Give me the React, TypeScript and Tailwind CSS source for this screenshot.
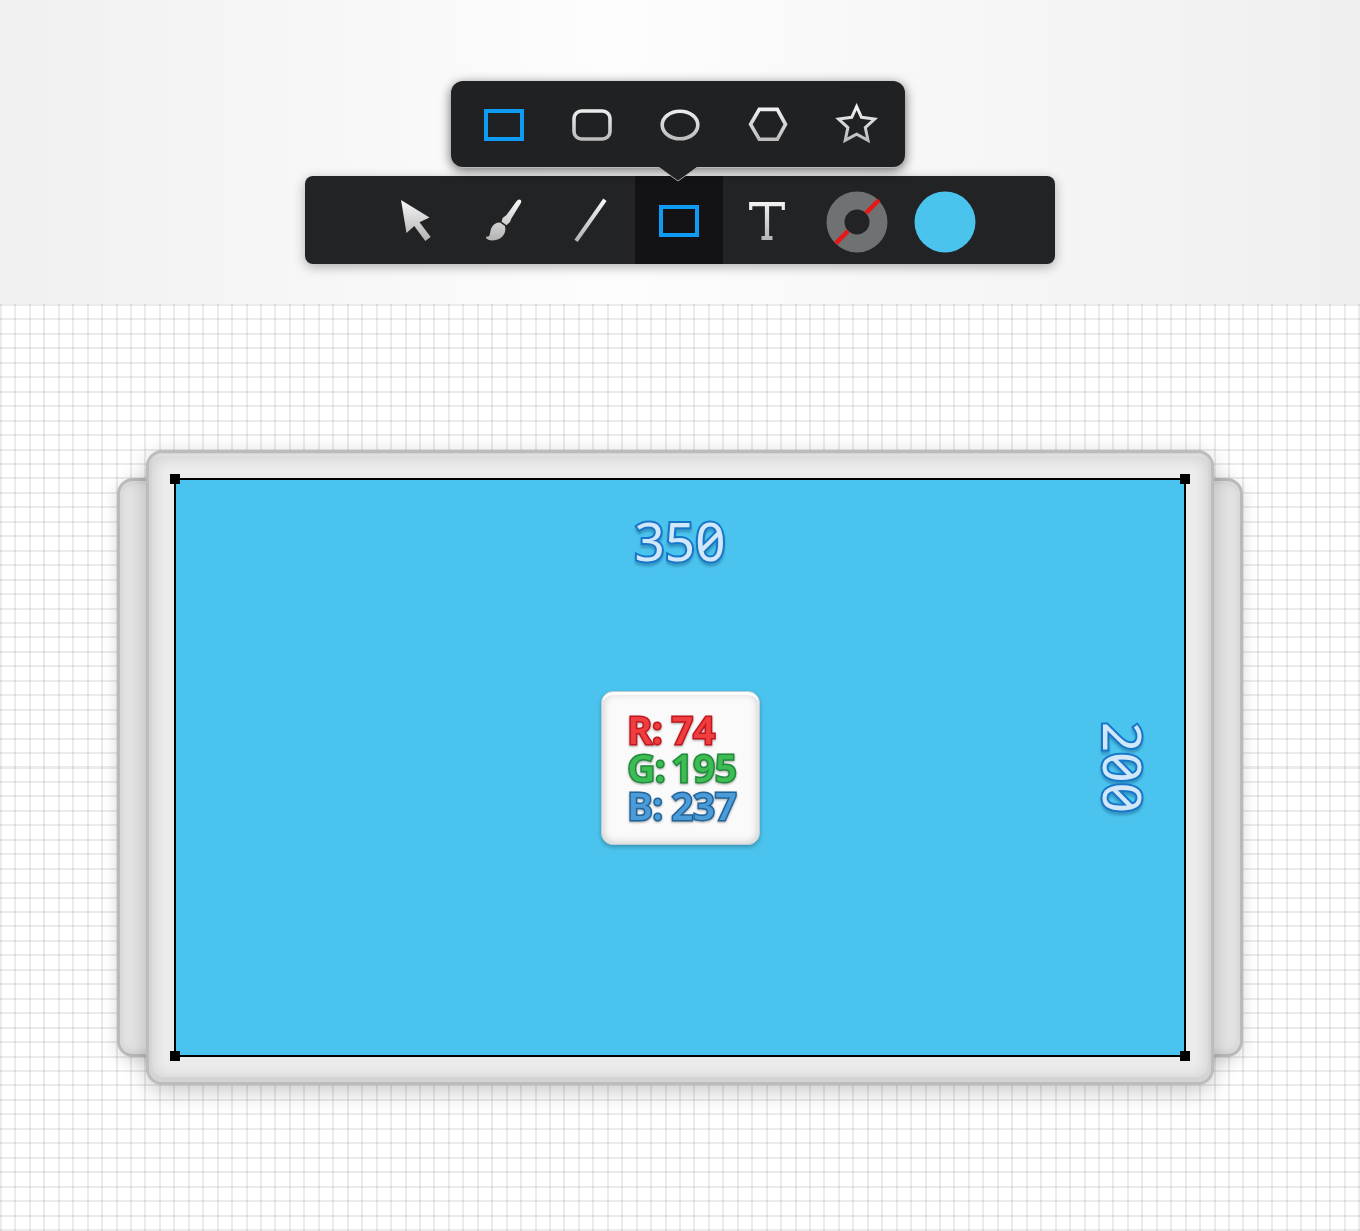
import type { ReactNode } from "react";

const metal = "url(#metal)";

function ToolButton({ label, active = false, short = false, children }: {
  label: string;
  active?: boolean;
  short?: boolean;
  children: ReactNode;
}) {
  return (
    <button
      type="button"
      aria-label={label}
      aria-pressed={active}
      className={`${short ? "h-[86px]" : "h-[88px]"} w-[88px] shrink-0 ${active && !short ? "bg-[#131315]" : ""}`}
    >
      <svg viewBox="0 0 88 88" className="size-[88px]" fill="none" aria-hidden="true">
        {children}
      </svg>
    </button>
  );
}

function ShapeMenu() {
  return (
    <div
      role="group"
      aria-label="Shapes"
      className="relative z-10 mr-1 flex h-[86px] rounded-xl bg-[#202123] pr-[5px] pl-[9px] shadow-[0_1px_0_#b9b9b9,0_3px_12px_rgba(0,0,0,0.6)]"
    >
      <ToolButton label="Rectangle" active short>
        <rect x="26" y="30" width="36" height="28" stroke="#0e9bf3" strokeWidth="4" />
      </ToolButton>
      <ToolButton label="Rounded rectangle" short>
        <rect x="26" y="30" width="36" height="28" rx="7.5" stroke={metal} strokeWidth="3.6" />
      </ToolButton>
      <ToolButton label="Ellipse" short>
        <ellipse cx="44" cy="44" rx="17.8" ry="13.8" stroke={metal} strokeWidth="3.6" />
      </ToolButton>
      <ToolButton label="Polygon" short>
        <path d="M35.3 28.4H53.3L61.5 43.3L53.3 58.3H35.3L26.6 43.3Z" stroke={metal} strokeWidth="3.6" />
      </ToolButton>
      <ToolButton label="Star" short>
        <path d="M44.6 25.6L49.5 36.3L62.6 38L53.3 46.6L56 59.4L44.6 53.3L33.2 59.4L35.9 46.6L26.6 38L39.7 36.3Z" stroke={metal} strokeWidth="3" />
      </ToolButton>
      <svg viewBox="0 0 40 16" className="absolute top-[85px] left-[207px] h-4 w-10" aria-hidden="true">
        <path d="M0 0V1L1 1L20 15L39 1H40V0Z" fill="#202123" />
        <path d="M0 1.5H1L20 15L39 1.5H40" fill="none" stroke="#a8a8a8" strokeWidth="1" />
      </svg>
    </div>
  );
}

function Toolbar() {
  return (
    <div
      role="toolbar"
      aria-label="Drawing tools"
      className="mt-[9px] flex w-[750px] rounded-lg bg-[#222325] pl-[66px] shadow-[0_3px_12px_rgba(0,0,0,0.3)]"
    >
      <ToolButton label="Select">
        <path d="M30 24L58.5 41.5L48.5 46.2L59.7 61L54.3 65L43.3 50L35.5 57Z" fill={metal} />
      </ToolButton>
      <ToolButton label="Brush">
        <path d="M57.5 25.2Q59.6 22.6 61.4 23.8Q63 25 61.6 27.4L52.4 42.6L51 46L47.6 49.2L42.6 45.8L43.6 42L47.5 39Z" fill={metal} />
        <path d="M27 60.5C31 61.5 30.6 58.5 31.6 54.5C33 49 37 46.2 41 46.6L46 50C47.4 56 44.8 60.4 40 63C36 65 29.5 65.2 27 62Z" fill={metal} />
      </ToolButton>
      <ToolButton label="Line">
        <path d="M30.2 63.2L56.8 25.4" stroke={metal} strokeWidth="4" strokeLinecap="square" />
      </ToolButton>
      <ToolButton label="Rectangle" active>
        <rect x="26" y="31" width="36" height="28" stroke="#0e9bf3" strokeWidth="4" />
      </ToolButton>
      <ToolButton label="Text">
        <path d="M27.7 34V27.7H60.3V34" stroke={metal} strokeWidth="3.2" />
        <path d="M27 28.2H61M44 28V62M38.5 62H49.5" stroke={metal} strokeWidth="4.2" />
      </ToolButton>
      <ToolButton label="No stroke">
        <circle cx="46" cy="46" r="21.5" stroke="#707173" strokeWidth="18" />
        <path d="M24.7 67.3L37 55M55 37L68 24" stroke="#e61717" strokeWidth="4.5" />
      </ToolButton>
      <ToolButton label="Fill colour">
        <circle cx="46" cy="46" r="30.5" fill="#4ac3ed" />
      </ToolButton>
    </div>
  );
}

const channels = [
  { name: "R:", value: 74, style: "text-[#ee3e40] [-webkit-text-stroke:3px_#c4141c]" },
  { name: "G:", value: 195, style: "text-[#3cbc52] [-webkit-text-stroke:3px_#1f8a3c]" },
  { name: "B:", value: 237, style: "text-[#4a9bd8] [-webkit-text-stroke:3px_#1f659c]" },
];

function ColourCard() {
  return (
    <dl className="col-start-1 row-start-1 h-[154px] w-[159px] place-self-center rounded-xl border border-[#b9cdd6] bg-[#fafafa] pt-[18px] pl-[26px] text-[38px] leading-[38px] font-semibold shadow-[0_2px_4px_rgba(0,0,0,0.25),inset_0_3px_1px_#fff,inset_0_0_7px_2px_rgba(0,0,0,0.16)]">
      {channels.map((c) => (
        <div key={c.name} className={`flex drop-shadow-[0_1px_1px_rgba(0,0,0,0.35)] [paint-order:stroke_fill] ${c.style}`}>
          <dt className="w-[44px]">{c.name}</dt>
          <dd>{c.value}</dd>
        </div>
      ))}
    </dl>
  );
}

const sizeText =
  "col-start-1 row-start-1 text-[53px] leading-[64px] text-[#d3e7fb] slashed-zero drop-shadow-[0_3px_1px_rgba(0,40,90,0.28)] [-webkit-text-stroke:4px_#1676c8] [paint-order:stroke_fill]";

const handle = "absolute size-[10px] bg-black";

function Artboard() {
  return (
    <div className="relative grid aspect-[1012/579] w-full border-2 border-black bg-[#4ac4ee]">
      <span className={`${sizeText} mt-[29px] self-start justify-self-center`}>350</span>
      <span className={`${sizeText} mr-[29px] self-center justify-self-end [writing-mode:vertical-rl]`}>200</span>
      <ColourCard />
      <i className={`${handle} -top-[6px] -left-[6px]`} />
      <i className={`${handle} -top-[6px] -right-[6px]`} />
      <i className={`${handle} -bottom-[6px] -left-[6px]`} />
      <i className={`${handle} -right-[6px] -bottom-[6px]`} />
    </div>
  );
}

export default function App() {
  return (
    <div className="min-h-screen bg-white font-['Noto_Sans','Open_Sans',sans-serif]">
      <svg className="absolute size-0" aria-hidden="true">
        <defs>
          <linearGradient id="metal" gradientUnits="userSpaceOnUse" x1="0" y1="24" x2="0" y2="64">
            <stop offset="0" stopColor="#f6f6f6" />
            <stop offset="1" stopColor="#b4b4b5" />
          </linearGradient>
        </defs>
      </svg>
      <header className="flex flex-col items-center bg-linear-to-r from-[#f0f0f0] via-[#fdfdfd] via-45% to-[#efefef] pt-[81px] pb-10">
        <ShapeMenu />
        <Toolbar />
      </header>
      <main className="grid bg-[repeating-linear-gradient(90deg,rgba(0,0,0,0.08)_0_2px,transparent_2px_calc((100%-2px)/94)),repeating-linear-gradient(180deg,rgba(0,0,0,0.08)_0_2px,transparent_2px_calc((100%-2px)/64))] px-[117px] py-[146px]">
        <div className="col-start-1 row-start-1 my-7 rounded-2xl border-[3px] border-[#bababa] bg-[#e6e6e6] shadow-[0_4px_16px_rgba(0,0,0,0.16),inset_0_0_1px_3px_#dadada,inset_0_0_12px_rgba(0,0,0,0.1)]" />
        <div className="col-start-1 row-start-1 mx-[29px] rounded-2xl border-[3px] border-[#bcbcbc] bg-[#ebebeb] p-[25px] shadow-[0_6px_22px_rgba(0,0,0,0.22),inset_0_-2px_1px_3px_#d4d4d4,inset_0_0_1px_3px_#e0e0e0,inset_0_0_14px_4px_rgba(0,0,0,0.12)]">
          <Artboard />
        </div>
      </main>
    </div>
  );
}
